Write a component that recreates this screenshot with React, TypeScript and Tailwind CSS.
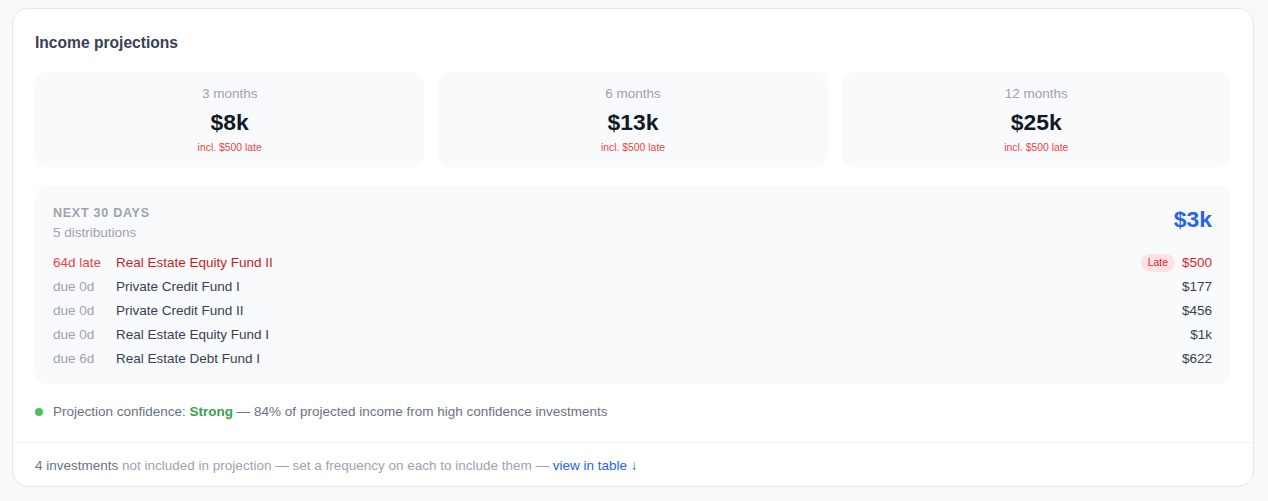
import React from "react";

const rows = [
  { label: "64d late", name: "Real Estate Equity Fund II", amount: "$500", late: true },
  { label: "due 0d", name: "Private Credit Fund I", amount: "$177" },
  { label: "due 0d", name: "Private Credit Fund II", amount: "$456" },
  { label: "due 0d", name: "Real Estate Equity Fund I", amount: "$1k" },
  { label: "due 6d", name: "Real Estate Debt Fund I", amount: "$622" },
];

const stats = [
  { period: "3 months", value: "$8k" },
  { period: "6 months", value: "$13k" },
  { period: "12 months", value: "$25k" },
];

export default function App() {
  return (
    <div
      className="min-h-[501px] bg-[#f8f9fb] pt-[8px] pl-[12px]"
      style={{ fontFamily: '"Liberation Sans", Arial, sans-serif' }}
    >
      <div className="w-[1242px] h-[479px] rounded-[16px] border border-[#e5e7eb] bg-white flex flex-col">
        <div className="px-[22px] pt-[23px]">
          <h2 className="text-[15.6px] leading-[22px] font-bold text-[#374151]">Income projections</h2>
          <div className="mt-[18px] grid grid-cols-3 gap-[14px]">
            {stats.map((s) => (
              <div
                key={s.period}
                className="h-[95px] rounded-[12px] bg-[#f9fafb] flex flex-col items-center pt-[13px]"
              >
                <div className="text-[13.5px] leading-[18px] text-[#9ca3af]">{s.period}</div>
                <div className="mt-[5px] text-[22.9px] leading-[28px] font-bold text-[#111827]">{s.value}</div>
                <div className="mt-[5px] text-[10.4px] leading-[14px] text-[#ef4444]">incl. $500 late</div>
              </div>
            ))}
          </div>

          <div className="mt-[19px] h-[198px] rounded-[12px] bg-[#f9fafb] pl-[18px] pr-[19px] pt-[19px]">
            <div className="flex items-start justify-between">
              <div>
                <div className="text-[12.5px] leading-[16px] font-bold tracking-[0.06em] text-[#9ca3af]">NEXT 30 DAYS</div>
                <div className="mt-[3px] text-[13.5px] leading-[18px] text-[#9ca3af]">5 distributions</div>
              </div>
              <div className="mt-[0px] text-[22.9px] leading-[28px] font-bold text-[#2563eb]">$3k</div>
            </div>
            <div className="mt-[9px]">
              {rows.map((r) => (
                <div key={r.name} className="flex items-center h-[24px] text-[13.5px]">
                  <div className={`w-[63px] ${r.late ? "text-[#ef4444]" : "text-[#9ca3af]"}`}>{r.label}</div>
                  <div className={`flex-1 ${r.late ? "text-[#c81e1e]" : "text-[#374151]"}`}>{r.name}</div>
                  {r.late && (
                    <span className="mr-[7px] h-[18px] px-[7px] rounded-full bg-[#fee2e2] text-[#dc2626] text-[10.4px] leading-[18px]">
                      Late
                    </span>
                  )}
                  <div className={r.late ? "text-[#dc2626]" : "text-[#374151]"}>{r.amount}</div>
                </div>
              ))}
            </div>
          </div>

          <div className="mt-[18px] flex items-center h-[20px] text-[13.5px] text-[#6b7280]">
            <span className="w-[8px] h-[8px] rounded-full bg-[#4ac15a] mr-[10px]" />
            <span>
              Projection confidence: <span className="font-bold text-[#3aa348]">Strong</span> — 84% of projected
              income from high confidence investments
            </span>
          </div>
        </div>

        <div className="mt-[20px] border-t border-[#f0f1f3] px-[22px] pt-[13px] text-[13.5px] leading-[20px]">
          <span className="text-[#6b7280]">4 investments</span>
          <span className="text-[#9ca3af]"> not included in projection — set a frequency on each to include them — </span>
          <span className="text-[#2563eb]">view in table ↓</span>
        </div>
      </div>
    </div>
  );
}
